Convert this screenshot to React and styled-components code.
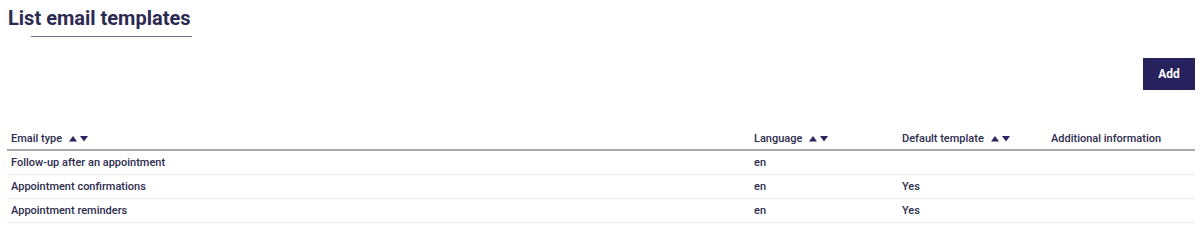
import React from "react";
import styled, { createGlobalStyle } from "styled-components";

const GlobalStyle = createGlobalStyle`
  body {
    margin: 0;
    background: #fff;
    font-family: Roboto, "Liberation Sans", sans-serif;
    color: #2d2c4e;
  }
`;

const columns = [
  { key: "type", label: "Email type", sortable: true, width: 743 },
  { key: "lang", label: "Language", sortable: true, width: 148 },
  { key: "def", label: "Default template", sortable: true, width: 149 },
  { key: "info", label: "Additional information", sortable: false, width: 148 },
];

const rows = [
  { type: "Follow-up after an appointment", lang: "en", def: "", info: "" },
  { type: "Appointment confirmations", lang: "en", def: "Yes", info: "" },
  { type: "Appointment reminders", lang: "en", def: "Yes", info: "" },
];

const SortIcon = () => (
  <SortSvg viewBox="0 0 20 7" width="20" height="7">
    <path d="M0 6.5 L4 1 L8 6.5 Z" fill="#2a2563" />
    <path d="M11 1 L19 1 L15 6.5 Z" fill="#2a2563" />
  </SortSvg>
);

const App = () => {
  return (
    <Page>
      <GlobalStyle />
      <Header>
        <Title>List email templates</Title>
        <TitleRule />
      </Header>
      <Toolbar>
        <AddButton>Add</AddButton>
      </Toolbar>
      <Table>
        <colgroup>
          {columns.map(col => (
            <col key={col.key} style={{ width: col.width }} />
          ))}
        </colgroup>
        <thead>
          <tr>
            {columns.map(col => (
              <HeadCell key={col.key}>
                {col.label}
                {col.sortable && <SortIcon />}
              </HeadCell>
            ))}
          </tr>
        </thead>
        <tbody>
          {rows.map(row => (
            <tr key={row.type}>
              {columns.map(col => (
                <Cell key={col.key}>{row[col.key]}</Cell>
              ))}
            </tr>
          ))}
        </tbody>
      </Table>
    </Page>
  );
};

const Page = styled.div`
  padding: 6px 5px 0 7px;
`;

const Header = styled.div`
  display: flex;
  flex-direction: column;
  align-items: flex-start;
`;

const Title = styled.h1`
  margin: 0;
  padding-left: 1px;
  font-size: 20px;
  line-height: 24px;
  font-weight: 700;
  color: #2b2a52;
`;

const TitleRule = styled.div`
  margin: 6px 0 0 24px;
  width: 161px;
  height: 1px;
  background: #6e6d8c;
`;

const Toolbar = styled.div`
  display: flex;
  justify-content: flex-end;
  margin-top: 21px;
`;

const AddButton = styled.button`
  width: 52px;
  height: 32px;
  border: none;
  background: #27215e;
  color: #fff;
  font-family: Roboto, "Liberation Sans", sans-serif;
  font-weight: 700;
  font-size: 12px;
  cursor: pointer;
`;

const Table = styled.table`
  width: 1188px;
  margin-top: 37px;
  border-collapse: collapse;
  table-layout: fixed;
  font-size: 11px;
  font-weight: 500;
`;

const HeadCell = styled.th`
  text-align: left;
  font-weight: 500;
  padding: 0 4px;
  height: 22px;
  vertical-align: middle;
  border-bottom: 2px solid #a9a9b4;
  color: #2d2c4e;
  white-space: nowrap;
`;

const SortSvg = styled.svg`
  margin-left: 7px;
  vertical-align: 0px;
`;

const Cell = styled.td`
  padding: 0 4px;
  height: 23px;
  border-bottom: 1px solid #ececf0;
  color: #2d2c4e;
  vertical-align: middle;
`;

export default App;
